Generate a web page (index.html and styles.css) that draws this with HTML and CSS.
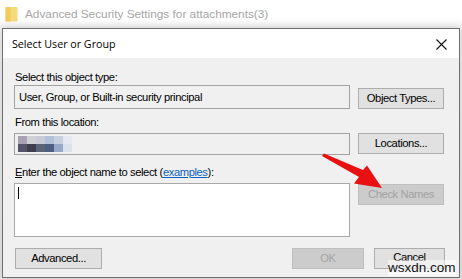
FILE: index.html
```html
<!DOCTYPE html>
<html>
<head>
<meta charset="utf-8">
<link rel="stylesheet" href="styles.css">
</head>
<body>
<div class="desktop">
  <div class="parent-title">
    <svg class="folder" width="13" height="16" viewBox="0 0 13 16"><rect x="0.5" y="1" width="12" height="14.5" rx="1" fill="#f6d97a"/><rect x="0.5" y="1" width="5" height="14.5" fill="#f1cc5d"/></svg>
    <span>Advanced Security Settings for attachments(3)</span>
  </div>
  <div class="dialog">
    <div class="titlebar">
      <span class="title">Select User or Group</span>
      <svg class="close" width="11" height="11" viewBox="0 0 11 11"><path d="M0.5 0.5 L10.5 10.5 M10.5 0.5 L0.5 10.5" stroke="#111" stroke-width="1.1"/></svg>
    </div>
    <div class="body">
      <div class="label l1">Select this object type:</div>
      <div class="row r1">
        <div class="field ro">User, Group, or Built-in security principal</div>
        <div class="btn">Object Types...</div>
      </div>
      <div class="label l2">From this location:</div>
      <div class="row r2">
        <div class="field ro loc">
          <div class="pix">
            <i style="background:#a8a2b4"></i><i style="background:#cfcfd6"></i><i style="background:#c9ccd6"></i><i style="background:#b4c2d8"></i><i style="background:#c6d0e2"></i><i style="background:#e6e9ef"></i>
            <i style="background:#55536b"></i><i style="background:#3e3e4e"></i><i style="background:#5a6476"></i><i style="background:#4d5f80"></i><i style="background:#98a8c8"></i><i style="background:#dde2ea"></i>
          </div>
        </div>
        <div class="btn">Locations...</div>
      </div>
      <div class="label l3"><u>E</u>nter the object name to select (<a class="link">examples</a>):</div>
      <div class="row r3">
        <div class="field area"><span class="caret"></span></div>
        <div class="btn disabled">Check Names</div>
      </div>
      <div class="footer">
        <div class="btn wide">Advanced...</div>
        <div class="spacer"></div>
        <div class="btn disabled ok">OK</div>
        <div class="btn cancel">Cancel</div>
      </div>
    </div>
  </div>
  <svg class="arrow" width="70" height="45" viewBox="0 0 70 45">
    <path d="M2 6 L4 3.5 L43 20 L47 15.5 L62 38 L34 33.5 L39 27 Z" fill="#e81010"/>
  </svg>
  <div class="watermark">wsxdn.com</div>
</div>
</body>
</html>
```

FILE: styles.css
```css
html, body {
  margin: 0;
  padding: 0;
  background: #ffffff;
}
.desktop {
  position: relative;
  width: 462px;
  height: 279px;
  overflow: hidden;
  background: linear-gradient(#ffffff 0, #ffffff 18px, #f3f3f3 28px, #e9e9e9 100%);
}
.parent-title {
  height: 28px;
  display: flex;
  align-items: center;
  padding-left: 5px;
  gap: 7px;
  font-family: "Liberation Sans", Arial, sans-serif;
  font-size: 11.8px;
  color: #a6a6a6;
}
.folder {
  margin-top: -1px;
}
.dialog {
  margin-left: 2px;
  width: 456px;
  height: 248px;
  border: 1px solid #6f6f6f;
  background: #f0f0f0;
  box-shadow: 0 0 8px rgba(0,0,0,0.18);
  display: flex;
  flex-direction: column;
}
.titlebar {
  height: 29px;
  background: #ffffff;
  display: flex;
  align-items: center;
  justify-content: space-between;
  padding: 0 12px 0 9px;
  flex: none;
}
.title {
  font-family: "Open Sans", sans-serif;
  font-size: 10.7px;
  color: #000;
  margin-top: 1px;
}
.close {
  margin-top: 1px;
}
.body {
  flex: 1;
  padding: 12px 14px 0 11px;
  font-family: "Liberation Sans", Arial, sans-serif;
  font-size: 11.2px;
  letter-spacing: -0.4px;
  color: #000;
}
.label {
  height: 15px;
  line-height: 15px;
  padding-left: 1px;
}
.l2 {
  margin-top: 6px;
  margin-bottom: 3px;
}
.l3 {
  margin-top: 10px;
  margin-bottom: 3px;
}
.row {
  display: flex;
  align-items: flex-start;
  gap: 8px;
}
.field {
  width: 336px;
  box-sizing: border-box;
  border: 1px solid #a2a2a2;
  padding-left: 4px;
  flex: none;
}
.field.ro {
  height: 24px;
  line-height: 22px;
  background: #f0f0f0;
}
.r1 .btn {
  margin-top: 3px;
}
.field.loc {
  height: 22px;
  display: flex;
  align-items: center;
  padding-left: 3px;
}
.pix {
  display: grid;
  grid-template-columns: repeat(6, 9px);
  grid-auto-rows: 8px;
  filter: blur(0.6px);
}
.pix i {
  display: block;
}
.btn {
  width: 86px;
  height: 21px;
  box-sizing: border-box;
  border: 1px solid #adadad;
  background: #e1e1e1;
  text-align: center;
  line-height: 19px;
  flex: none;
}
.btn.disabled {
  background: #cccccc;
  border-color: #bfbfbf;
  color: #a3a3a3;
}
.link {
  color: #0a62c4;
  text-decoration: underline;
}
.area {
  height: 54px;
  background: #ffffff;
  border-color: #a9a9a9;
  padding-left: 3px;
}
.r3 .btn {
  margin-top: 1px;
}
.caret {
  display: block;
  width: 1px;
  height: 12px;
  background: #000;
  margin-top: 3px;
}
.footer {
  display: flex;
  align-items: center;
  gap: 10px;
  margin-top: 11px;
  padding-left: 1px;
}
.spacer {
  flex: 1;
}
.btn.wide {
  width: 87px;
}
.btn.ok {
  width: 72px;
}
.btn.cancel {
  width: 71px;
  line-height: 17px;
}
.arrow {
  position: absolute;
  left: 320px;
  top: 150px;
}
.watermark {
  position: absolute;
  left: 388px;
  top: 260px;
  font-family: "Liberation Sans", Arial, sans-serif;
  font-size: 13.5px;
  color: #111;
  background: rgba(255,255,255,0.5);
  line-height: 16px;
}
```
